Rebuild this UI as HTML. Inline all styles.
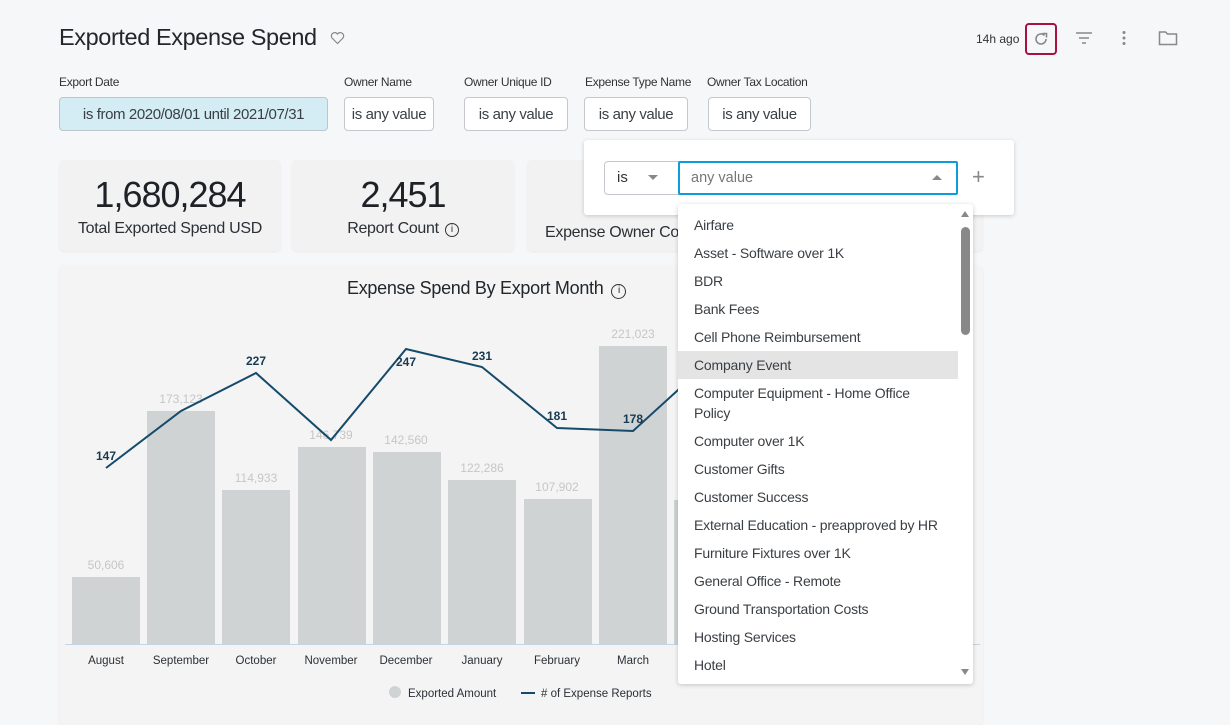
<!DOCTYPE html>
<html><head><meta charset="utf-8"><style>
*{box-sizing:border-box;margin:0;padding:0}
body{width:1230px;height:717px;overflow:hidden;background:#f6f7f9;font-family:"Liberation Sans",sans-serif;color:#262d33;position:relative}
.abs{position:absolute}
.lbl{position:absolute;top:75px;font-size:12px;color:#333;letter-spacing:-0.3px}
.fbtn{position:absolute;top:97px;height:34px;border:1px solid #c4c8cc;border-radius:4px;background:#fff;font-size:15px;color:#3a3f44;display:flex;align-items:center;justify-content:center;letter-spacing:-0.4px;white-space:nowrap}
.card{position:absolute;top:160px;height:91px;width:222px;background:#f2f2f2;border-radius:5px;box-shadow:0 1px 2px rgba(0,0,0,.06);text-align:center}
.card .n{font-size:36px;margin-top:14px;letter-spacing:-1px;color:#1e2226}
.card .t{font-size:16px;margin-top:4px;color:#2b3036;letter-spacing:-0.3px}
.item{height:28px;line-height:28px;padding-left:16px;font-size:14px;color:#3a3f44;letter-spacing:-0.2px}
.info{display:inline-block;width:14px;height:14px;border:1.4px solid #333;border-radius:50%;font-size:10px;line-height:11px;text-align:center;vertical-align:1px;margin-left:6px}
</style></head><body>
<div class="abs" style="left:59px;top:24px;font-size:23.5px;letter-spacing:-0.4px;color:#22272c">Exported Expense Spend</div>
<svg class="abs" style="left:330px;top:31px" width="15" height="14" viewBox="0 0 15 14"><path d="M7.5 12.5 L2 7 A3 3 0 0 1 7.5 3 A3 3 0 0 1 13 7 Z" fill="none" stroke="#888" stroke-width="1.2"/></svg>
<div class="abs" style="left:976px;top:32px;font-size:12px;color:#333">14h ago</div>
<div class="abs" style="left:1025px;top:23px;width:32px;height:32px;border:2px solid #a8123e;border-radius:4px"></div>
<svg class="abs" style="left:1031px;top:29px" width="20" height="20" viewBox="0 0 20 20"><path d="M15 10 A5 5 0 1 1 13.5 6.4" fill="none" stroke="#888" stroke-width="1.6"/><path d="M11.5 4.5 L15.5 4.5 L15.5 8.5" fill="none" stroke="#888" stroke-width="1.6"/></svg>
<svg class="abs" style="left:1075px;top:30px" width="18" height="16" viewBox="0 0 18 16"><path d="M1 3h16M4 8h10M7 13h4" stroke="#888" stroke-width="1.6"/></svg>
<svg class="abs" style="left:1120px;top:30px" width="8" height="16" viewBox="0 0 8 16"><circle cx="4" cy="2.5" r="1.5" fill="#888"/><circle cx="4" cy="8" r="1.5" fill="#888"/><circle cx="4" cy="13.5" r="1.5" fill="#888"/></svg>
<svg class="abs" style="left:1158px;top:30px" width="20" height="16" viewBox="0 0 20 16"><path d="M1.5 2h6l2 2h9v10.5h-17z" fill="none" stroke="#888" stroke-width="1.5"/></svg>

<div class="lbl" style="left:59px">Export Date</div>
<div class="lbl" style="left:344px">Owner Name</div>
<div class="lbl" style="left:464px">Owner Unique ID</div>
<div class="lbl" style="left:585px">Expense Type Name</div>
<div class="lbl" style="left:707px">Owner Tax Location</div>
<div class="fbtn" style="left:59px;width:269px;background:#d4ecf4;border-color:#bcc6cc">is from 2020/08/01 until 2021/07/31</div>
<div class="fbtn" style="left:344px;width:90px">is any value</div>
<div class="fbtn" style="left:464px;width:104px">is any value</div>
<div class="fbtn" style="left:584px;width:104px">is any value</div>
<div class="fbtn" style="left:708px;width:103px">is any value</div>

<div class="card" style="left:59px"><div class="n">1,680,284</div><div class="t">Total Exported Spend USD</div></div>
<div class="card" style="left:292px"><div class="n">2,451</div><div class="t">Report Count<span class="info">i</span></div></div>
<div class="card" style="left:527px;width:456px;text-align:left"><div class="t" style="margin-top:64px;padding-left:18px">Expense Owner Count</div></div>

<div class="abs" style="left:59px;top:265px;width:924px;height:460px;background:#f4f4f4;border-radius:5px;box-shadow:0 1px 2px rgba(0,0,0,.06)"></div>
<div class="abs" style="left:347px;top:278px;font-size:18px;color:#22272c;letter-spacing:-0.3px">Expense Spend By Export Month<span class="info" style="width:15px;height:15px;margin-left:8px;line-height:12px">i</span></div>
<svg class="abs" style="left:0;top:0" width="1230" height="717">
<g fill="#d0d3d4">
<rect x="72" y="577" width="68" height="67"/><rect x="147" y="411" width="68" height="233"/><rect x="222" y="490" width="68" height="154"/><rect x="298" y="447" width="68" height="197"/><rect x="373" y="452" width="68" height="192"/><rect x="448" y="480" width="68" height="164"/><rect x="524" y="499" width="68" height="145"/><rect x="599" y="346" width="68" height="298"/><rect x="674" y="500" width="68" height="144"/>
</g>
<line x1="65" y1="644.5" x2="980" y2="644.5" stroke="#c5d3e6"/>
<g font-size="12" fill="#c6c6c6" text-anchor="middle" font-family="Liberation Sans">
<text x="106" y="569">50,606</text><text x="181" y="403">173,123</text><text x="256" y="482">114,933</text><text x="331" y="439">146,739</text><text x="406" y="444">142,560</text><text x="482" y="472">122,286</text><text x="557" y="491">107,902</text><text x="633" y="338">221,023</text>
</g>
<polyline points="106,468 181,411 256,373 331,440 406,349 482,367 557,428 633,431 700,370" fill="none" stroke="#164a6b" stroke-width="2"/>
<g font-size="12" fill="#173a52" text-anchor="middle" font-family="Liberation Sans" font-weight="bold">
<text x="106" y="460">147</text><text x="256" y="365">227</text><text x="406" y="366">247</text><text x="482" y="360">231</text><text x="557" y="420">181</text><text x="633" y="423">178</text>
</g>
<g font-size="11.5" fill="#2b3036" text-anchor="middle" font-family="Liberation Sans">
<text x="106" y="664">August</text><text x="181" y="664">September</text><text x="256" y="664">October</text><text x="331" y="664">November</text><text x="406" y="664">December</text><text x="482" y="664">January</text><text x="557" y="664">February</text><text x="633" y="664">March</text>
</g>
<circle cx="395" cy="692" r="6" fill="#d0d3d4"/>
<text x="408" y="697" font-size="11.5" fill="#2b3036" font-family="Liberation Sans">Exported Amount</text>
<line x1="521" y1="693" x2="535" y2="693" stroke="#164a6b" stroke-width="2"/>
<text x="541" y="697" font-size="11.5" fill="#2b3036" font-family="Liberation Sans"># of Expense Reports</text>
</svg>

<div class="abs" style="left:584px;top:140px;width:430px;height:75px;background:#fff;border-radius:3px;box-shadow:0 1px 4px rgba(0,0,0,.18)"></div>
<div class="abs" style="left:604px;top:161px;width:76px;height:34px;border:1px solid #c4c8cc;border-radius:4px 0 0 4px;background:#fff;font-size:15px;line-height:32px;padding-left:12px;color:#333">is</div>
<svg class="abs" style="left:647px;top:174px" width="12" height="8"><path d="M1 1h10l-5 5z" fill="#888"/></svg>
<div class="abs" style="left:678px;top:161px;width:280px;height:34px;border:2px solid #0c9ed9;border-radius:2px;background:#fff;font-size:14.5px;line-height:30px;padding-left:11px;color:#777">any value</div>
<svg class="abs" style="left:931px;top:174px" width="12" height="8"><path d="M1 6h10l-5 -5z" fill="#888"/></svg>
<div class="abs" style="left:972px;top:164px;font-size:22px;color:#888;font-weight:300">+</div>

<div class="abs" style="left:678px;top:204px;width:295px;height:480px;background:#fff;border-radius:3px;box-shadow:0 1px 5px rgba(0,0,0,.2);padding-top:7px;overflow:hidden">
<div class="item">Airfare</div>
<div class="item">Asset - Software over 1K</div>
<div class="item">BDR</div>
<div class="item">Bank Fees</div>
<div class="item">Cell Phone Reimbursement</div>
<div class="item" style="background:#e4e4e4;width:280px">Company Event</div>
<div class="item" style="line-height:20px;height:48px;padding-top:4px">Computer Equipment - Home Office<br>Policy</div>
<div class="item">Computer over 1K</div>
<div class="item">Customer Gifts</div>
<div class="item">Customer Success</div>
<div class="item">External Education - preapproved by HR</div>
<div class="item">Furniture Fixtures over 1K</div>
<div class="item">General Office - Remote</div>
<div class="item">Ground Transportation Costs</div>
<div class="item">Hosting Services</div>
<div class="item">Hotel</div>
</div>
<svg class="abs" style="left:960px;top:210px" width="10" height="8"><path d="M1 7h8l-4-6z" fill="#888"/></svg>
<div class="abs" style="left:961px;top:227px;width:9px;height:108px;background:#888;border-radius:5px"></div>
<svg class="abs" style="left:960px;top:668px" width="10" height="8"><path d="M1 1h8l-4 6z" fill="#888"/></svg>
</body></html>
